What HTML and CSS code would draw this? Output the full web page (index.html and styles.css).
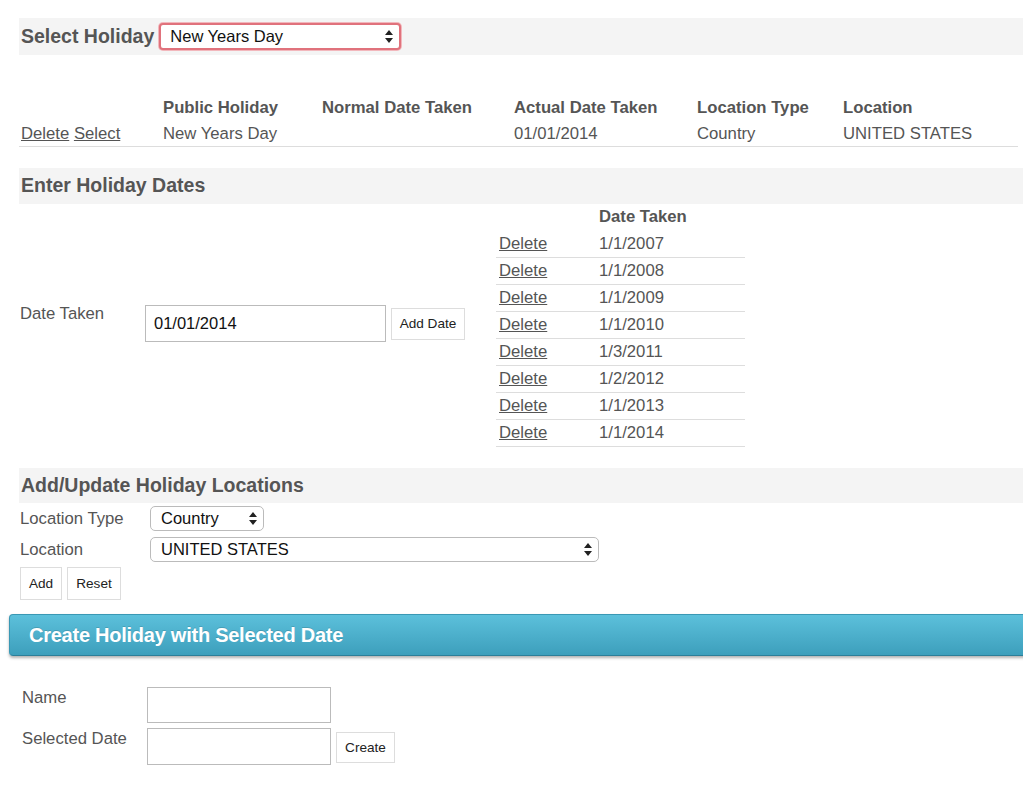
FILE: index.html
```html
<!DOCTYPE html>
<html>
<head>
<meta charset="utf-8">
<link rel="stylesheet" href="styles.css">
</head>
<body>
<div class="band band-top">
  <span class="band-title">Select Holiday</span>
  <div class="sel sel-focus sel-holiday">
    <span class="sel-text">New Years Day</span>
    <svg class="arrows" width="8" height="13" viewBox="0 0 8 13"><path d="M4 0 L8 5 L0 5 Z M0 8 L8 8 L4 13 Z" fill="#222"/></svg>
  </div>
</div>

<table class="htable">
  <tr class="hrow">
    <th class="c1"></th>
    <th class="c2">Public Holiday</th>
    <th class="c3">Normal Date Taken</th>
    <th class="c4">Actual Date Taken</th>
    <th class="c5">Location Type</th>
    <th class="c6">Location</th>
  </tr>
  <tr class="drow">
    <td class="c1"><a href="#">Delete</a> <a href="#">Select</a></td>
    <td class="c2">New Years Day</td>
    <td class="c3"></td>
    <td class="c4">01/01/2014</td>
    <td class="c5">Country</td>
    <td class="c6">UNITED STATES</td>
  </tr>
</table>

<div class="band band-sec"><span class="band-title">Enter Holiday Dates</span></div>

<div class="dates">
  <div class="date-form">
    <span class="label date-label">Date Taken</span>
    <div class="input input-date">01/01/2014</div>
    <button class="btn btn-adddate">Add Date</button>
  </div>
  <table class="dtable">
    <tr><th></th><th class="dcol">Date Taken</th></tr>
    <tr><td><a href="#">Delete</a></td><td class="dcol">1/1/2007</td></tr>
    <tr><td><a href="#">Delete</a></td><td class="dcol">1/1/2008</td></tr>
    <tr><td><a href="#">Delete</a></td><td class="dcol">1/1/2009</td></tr>
    <tr><td><a href="#">Delete</a></td><td class="dcol">1/1/2010</td></tr>
    <tr><td><a href="#">Delete</a></td><td class="dcol">1/3/2011</td></tr>
    <tr><td><a href="#">Delete</a></td><td class="dcol">1/2/2012</td></tr>
    <tr><td><a href="#">Delete</a></td><td class="dcol">1/1/2013</td></tr>
    <tr><td><a href="#">Delete</a></td><td class="dcol">1/1/2014</td></tr>
  </table>
</div>

<div class="band band-loc"><span class="band-title">Add/Update Holiday Locations</span></div>

<div class="loc">
  <div class="loc-row">
    <span class="label loc-label">Location Type</span>
    <div class="sel sel-gray sel-type">
      <span class="sel-text">Country</span>
      <svg class="arrows" width="8" height="13" viewBox="0 0 8 13"><path d="M4 0 L8 5 L0 5 Z M0 8 L8 8 L4 13 Z" fill="#222"/></svg>
    </div>
  </div>
  <div class="loc-row loc-row2">
    <span class="label loc-label">Location</span>
    <div class="sel sel-gray sel-loc">
      <span class="sel-text">UNITED STATES</span>
      <svg class="arrows" width="8" height="13" viewBox="0 0 8 13"><path d="M4 0 L8 5 L0 5 Z M0 8 L8 8 L4 13 Z" fill="#222"/></svg>
    </div>
  </div>
  <div class="loc-btns">
    <button class="btn btn-add">Add</button>
    <button class="btn btn-reset">Reset</button>
  </div>
</div>

<div class="bluebar"><span class="blue-title">Create Holiday with Selected Date</span></div>

<div class="create">
  <div class="c-row">
    <span class="label c-label">Name</span>
    <div class="input input-c"></div>
  </div>
  <div class="c-row c-row2">
    <span class="label c-label">Selected Date</span>
    <div class="input input-c input-c2"></div>
    <button class="btn btn-create">Create</button>
  </div>
</div>
</body>
</html>
```
FILE: styles.css
```css
* { box-sizing: border-box; }
html, body { margin: 0; padding: 0; background: #fff; }
body {
  font-family: "Liberation Sans", Arial, sans-serif;
  font-size: 16.7px;
  color: #555;
  width: 1023px;
  overflow: hidden;
}
a { color: #555; text-decoration: underline; }

.band {
  margin-left: 19px;
  background: #f4f4f4;
  display: flex;
  align-items: center;
}
.band-title {
  font-weight: bold;
  font-size: 19.5px;
  color: #555;
  padding-left: 2px;
}
.band-top { margin-top: 18px; height: 37px; }
.band-sec { margin-top: 21px; height: 36px; }
.band-loc { margin-top: 21px; height: 35px; }

.sel {
  position: relative;
  background: #fff;
  display: flex;
  align-items: center;
  color: #111;
  font-size: 16.5px;
}
.sel .arrows { position: absolute; right: 6px; top: 50%; margin-top: -7px; }
.sel-focus {
  margin-left: 5px;
  width: 242px;
  height: 27px;
  border: 2px solid #e0727c;
  border-radius: 4px;
  box-shadow: 0 0 0 1px #f2b7bc;
  padding-left: 9px;
}
.sel-gray {
  border: 1px solid #bbb;
  border-radius: 5px;
  height: 25px;
  padding-left: 10px;
}

.htable {
  margin-left: 19px;
  margin-top: 38px;
  width: 999px;
  border-collapse: collapse;
}
.htable th, .htable td {
  text-align: left;
  padding: 0 0 0 2px;
  white-space: nowrap;
}
.htable th { font-weight: bold; height: 27px; vertical-align: middle; padding-top: 2px; }
.htable td { height: 26px; border-bottom: 1px solid #ddd; vertical-align: middle; padding-top: 2px; }
.htable .c1 { width: 142px; }
.htable .c2 { width: 159px; }
.htable .c3 { width: 192px; }
.htable .c4 { width: 183px; }
.htable .c5 { width: 146px; }

.dates {
  margin-left: 19px;
  display: flex;
  align-items: center;
}
.date-form { display: flex; align-items: center; margin-top: -4px; }
.label { color: #555; font-size: 16.7px; }
.date-label { width: 126px; padding-left: 1px; margin-top: -18px; }
.input {
  border: 1px solid #bbb;
  background: #fff;
  color: #111;
  display: flex;
  align-items: center;
  font-size: 16.5px;
}
.input-date { width: 241px; height: 37px; padding-left: 8px; }
.btn {
  font-family: "Liberation Sans", Arial, sans-serif;
  font-size: 13.6px;
  color: #222;
  background: #fff;
  border: 1px solid #ddd;
  padding: 0;
  margin: 0;
}
.btn-adddate { margin-left: 5px; width: 74px; height: 32px; margin-top: 1px; }

.dtable {
  margin-left: 31px;
  width: 249px;
  border-collapse: collapse;
}
.dtable th { font-weight: bold; text-align: left; height: 27px; padding: 0 0 0 3px; vertical-align: middle; }
.dtable td { height: 27px; border-bottom: 1px solid #ddd; padding: 0 0 0 3px; vertical-align: middle; }
.dtable th.dcol, .dtable td.dcol { padding-left: 0; }
.dtable td:first-child, .dtable th:first-child { width: 103px; }

.loc { margin-left: 20px; }
.loc-row { display: flex; align-items: center; margin-top: 3px; }
.loc-row2 { margin-top: 6px; }
.loc-label { width: 130px; }
.sel-type { width: 114px; }
.sel-loc { width: 449px; }
.loc-btns { display: flex; gap: 5px; margin-top: 5px; }
.btn-add { width: 42px; height: 33px; }
.btn-reset { width: 54px; height: 33px; }

.bluebar {
  margin-top: 14px;
  margin-left: 9px;
  width: 1030px;
  height: 42px;
  border-radius: 4px 0 0 4px;
  background: linear-gradient(#5cc0db, #3d9fbc);
  border: 1px solid #3a98b4;
  border-bottom-color: #2c7f99;
  box-shadow: 0 2px 3px rgba(0,0,0,0.3);
  display: flex;
  align-items: center;
  padding-left: 19px;
}
.blue-title {
  color: #fff;
  font-weight: bold;
  font-size: 20px;
  letter-spacing: -0.25px;
  text-shadow: 0 -1px 0 rgba(0,0,0,0.15);
}

.create { margin-left: 22px; margin-top: 31px; }
.c-row { display: flex; align-items: flex-start; }
.c-row2 { margin-top: 5px; }
.c-label { width: 125px; padding-top: 1px; }
.input-c { width: 184px; height: 36px; }
.input-c2 { height: 37px; }
.btn-create { margin-left: 5px; margin-top: 4px; width: 59px; height: 31px; }
```
